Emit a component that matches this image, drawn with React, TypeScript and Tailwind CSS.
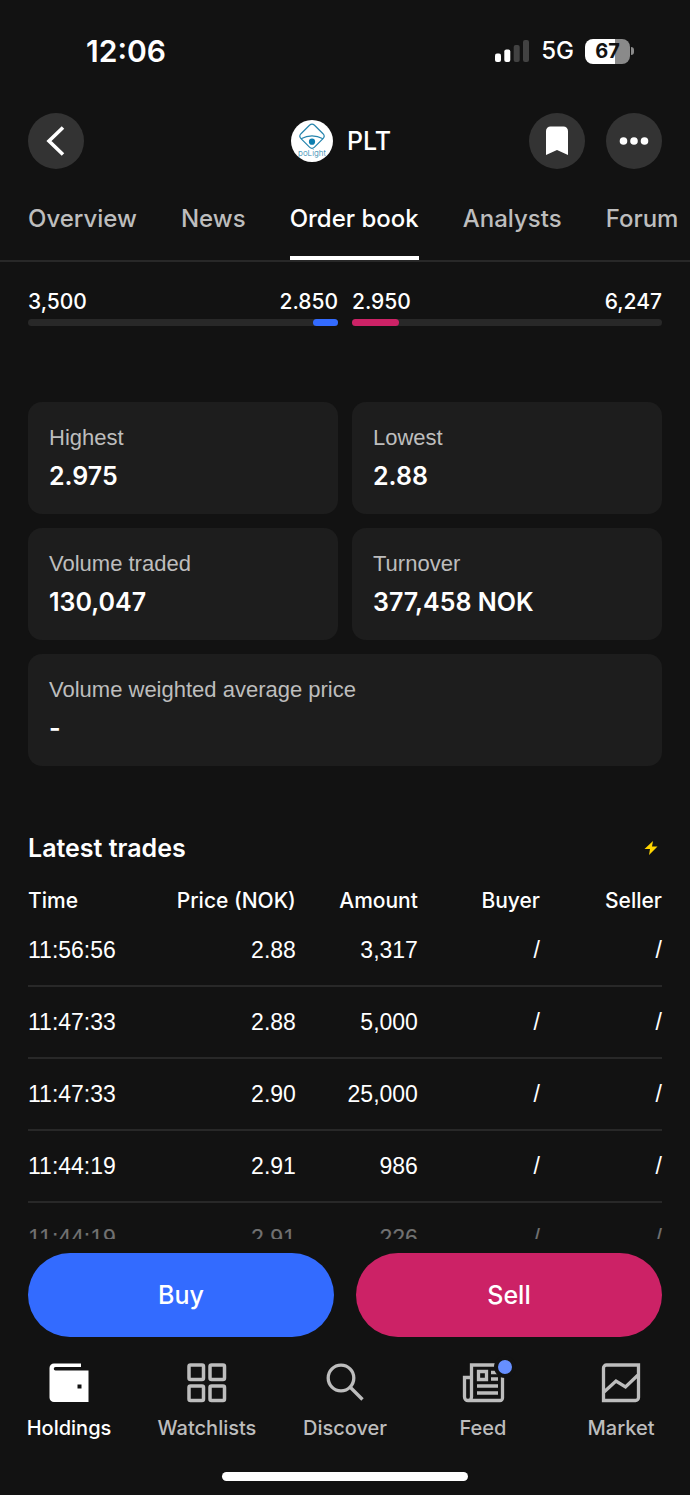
import { FC, ReactNode } from "react";

interface Trade {
  time: string;
  price: string;
  amount: string;
}

interface Stat {
  label: string;
  value: string;
  wide?: boolean;
}

interface NavItem {
  label: string;
  icon: ReactNode;
  active?: boolean;
}

const tabs = ["Overview", "News", "Order book", "Analysts", "Forum"];

const stats: Stat[] = [
  { label: "Highest", value: "2.975" },
  { label: "Lowest", value: "2.88" },
  { label: "Volume traded", value: "130,047" },
  { label: "Turnover", value: "377,458 NOK" },
  { label: "Volume weighted average price", value: "-", wide: true },
];

const trades: Trade[] = [
  { time: "11:56:56", price: "2.88", amount: "3,317" },
  { time: "11:47:33", price: "2.88", amount: "5,000" },
  { time: "11:47:33", price: "2.90", amount: "25,000" },
  { time: "11:44:19", price: "2.91", amount: "986" },
  { time: "11:44:19", price: "2.91", amount: "226" },
];

const WalletIcon = () => (
  <svg width="42" height="42" viewBox="0 0 42 42" fill="currentColor" aria-hidden="true">
    <path
      fillRule="evenodd"
      d="M6 1.5h27V5H7.5a1.5 1.5 0 0 0 0 3.5H40.5V40H6a4.5 4.5 0 0 1-4.5-4.5V6A4.5 4.5 0 0 1 6 1.5ZM29.5 22.5v4h4v-4Z"
    />
  </svg>
);

const GridIcon = () => (
  <svg width="42" height="42" viewBox="0 0 42 42" fill="none" stroke="currentColor" strokeWidth="3.5" aria-hidden="true">
    <rect x="3" y="3" width="14.5" height="14.5" rx="1.5" />
    <rect x="24" y="3" width="14.5" height="14.5" rx="1.5" />
    <rect x="3" y="24" width="14.5" height="14.5" rx="1.5" />
    <rect x="24" y="24" width="14.5" height="14.5" rx="1.5" />
  </svg>
);

const SearchIcon = () => (
  <svg width="42" height="42" viewBox="0 0 42 42" fill="none" stroke="currentColor" strokeWidth="3.3" aria-hidden="true">
    <circle cx="17" cy="16" r="12.8" />
    <path d="M26 25 38.5 37.500" />
  </svg>
);

const FeedIcon = () => (
  <svg width="46" height="42" viewBox="0 0 46 42" fill="none" stroke="currentColor" strokeWidth="3.3" aria-hidden="true">
    <path d="M35 3H11.5v32a3.5 3.5 0 0 1-7 0V15.5H10M8 38.5h32a2.5 2.5 0 0 0 2.5-2.5V15" />
    <path d="M18.500 9.500h8v8h-8ZM31 10.500h7M31 17h7M17 24H38M17 31H38" />
  </svg>
);

const MarketIcon = () => (
  <svg width="42" height="42" viewBox="0 0 42 42" fill="none" stroke="currentColor" strokeWidth="3.3" aria-hidden="true">
    <path d="M3.5 38.5V6A3 3 0 0 1 6.5 3h32v32.5a3 3 0 0 1-3 3ZM4 30 16 19l9.500 6L38 13" />
  </svg>
);

const navItems: NavItem[] = [
  { label: "Holdings", icon: <WalletIcon />, active: true },
  { label: "Watchlists", icon: <GridIcon /> },
  { label: "Discover", icon: <SearchIcon /> },
  { label: "Feed", icon: <FeedIcon /> },
  { label: "Market", icon: <MarketIcon /> },
];

const StatusBar = () => (
  <div className="flex items-center justify-between h-[102px] pl-[86px] pr-14 shrink-0">
    <span className="text-[30px] leading-9 font-semibold">12:06</span>
    <div className="flex items-center gap-[11px]">
      <svg width="35" height="22" viewBox="0 0 35 22" aria-hidden="true">
        <rect x="0" y="13.5" width="6" height="8.5" rx="2" fill="#fff" />
        <rect x="9.3" y="9.5" width="6" height="12.5" rx="2" fill="#fff" />
        <rect x="18.7" y="5" width="6" height="17" rx="2" fill="#424242" />
        <rect x="28" y="0" width="6" height="22" rx="2" fill="#424242" />
      </svg>
      <span className="text-2xl leading-8 font-medium">5G</span>
      <div className="flex items-center gap-px">
        <div className="flex items-center justify-center w-[45px] h-[25px] rounded-lg bg-linear-to-r from-white from-67% to-[#8a8a8a] to-67% text-xl leading-6 font-bold text-[#121212]">
          67
        </div>
        <div className="w-[3px] h-2 rounded-r-full bg-[#8a8a8a]" />
      </div>
    </div>
  </div>
);

const RoundButton: FC<{ label: string; children: ReactNode }> = ({ label, children }) => (
  <button
    type="button"
    aria-label={label}
    className="flex items-center justify-center size-14 rounded-full bg-[#333333]"
  >
    {children}
  </button>
);

const Logo = () => (
  <svg width="42" height="42" viewBox="0 0 42 42" aria-hidden="true">
    <circle cx="21" cy="21" r="21" fill="#fff" />
    <g fill="none" stroke="#2484ad" strokeWidth="1.2">
      <path d="M18.500 5.300a3.600 3.600 0 0 1 5 0L32 13.700a3.600 3.600 0 0 1 0 5l-8.500 8.400a3.600 3.600 0 0 1-5 0L10 18.700a3.600 3.600 0 0 1 0-5Z" />
      <path d="M10 18.700q11-5.600 22 0" />
    </g>
    <circle cx="21" cy="21.700" r="3.100" fill="#0d7eb0" />
    <text x="21" y="36" textAnchor="middle" fontSize="8" fontWeight="300" fill="#2484ad">
      poLight
    </text>
  </svg>
);

const Header = () => (
  <header className="grid grid-cols-3 items-center px-7 pt-[11px] shrink-0">
    <div>
      <RoundButton label="Back">
        <svg width="22" height="30" viewBox="0 0 22 30" fill="none" stroke="#fff" strokeWidth="3.6" aria-hidden="true">
          <path d="M18 1.500 4 15l14 13.500" />
        </svg>
      </RoundButton>
    </div>
    <div className="flex items-center justify-center gap-3.5 pr-2">
      <Logo />
      <h1 className="text-[25px] leading-8 font-medium">PLT</h1>
    </div>
    <div className="flex justify-end gap-[21px]">
      <RoundButton label="Save to watchlist">
        <svg width="22" height="30" viewBox="0 0 22 30" fill="#fff" aria-hidden="true">
          <path d="M0 5A4.500 4.500 0 0 1 4.500.500h13A4.500 4.500 0 0 1 22 5v24l-11-5L0 29Z" />
        </svg>
      </RoundButton>
      <RoundButton label="More">
        <svg width="30" height="8" viewBox="0 0 30 8" fill="#fff" aria-hidden="true">
          <circle cx="4.500" cy="4" r="3.800" />
          <circle cx="15" cy="4" r="3.800" />
          <circle cx="25.500" cy="4" r="3.800" />
        </svg>
      </RoundButton>
    </div>
  </header>
);

const Tabs = () => (
  <nav className="flex gap-11 h-[93px] px-7 border-b-2 border-[#282828] overflow-hidden shrink-0">
    {tabs.map((tab) => (
      <a
        key={tab}
        href="#"
        className={`flex items-center pt-3 border-b-4 text-2xl leading-8 font-medium whitespace-nowrap ${
          tab === "Order book"
            ? "border-white text-white"
            : "border-transparent text-[#bdbdbd]"
        }`}
      >
        {tab}
      </a>
    ))}
  </nav>
);

const Depth = () => (
  <section className="grid grid-cols-2 gap-3.5 pt-[26px] text-[21px] leading-7 font-medium">
    <div>
      <div className="flex justify-between">
        <span>3,500</span>
        <span>2.850</span>
      </div>
      <div className="flex justify-end h-[7px] mt-[3px] rounded-full bg-[#282828]">
        <div className="w-[8%] rounded-full bg-[#336bff]" />
      </div>
    </div>
    <div>
      <div className="flex justify-between">
        <span>2.950</span>
        <span>6,247</span>
      </div>
      <div className="flex h-[7px] mt-[3px] rounded-full bg-[#282828]">
        <div className="w-[15%] rounded-full bg-[#cc2266]" />
      </div>
    </div>
  </section>
);

const StatCard: FC<{ stat: Stat }> = ({ stat }) => (
  <div
    className={`h-28 px-[21px] pt-[22px] rounded-[14px] bg-[#1d1d1d] ${
      stat.wide ? "col-span-2" : ""
    }`}
  >
    <dt className="text-[22px] leading-7 text-[#bdbdbd] font-['Liberation_Sans',Arial,sans-serif]">
      {stat.label}
    </dt>
    <dd className="mt-2 text-[25px] leading-8 font-semibold">{stat.value}</dd>
  </div>
);

const LatestTrades = () => (
  <section className="pt-[66px]">
    <div className="flex items-center justify-between">
      <h2 className="text-[25px] leading-8 font-semibold">Latest trades</h2>
      <svg className="mr-1" width="14" height="14" viewBox="0 0 14 14" fill="#ffd500" role="img" aria-label="Real time">
        <path d="M9 0 .5 8H6l-1 6 8.500-8.500H8Z" />
      </svg>
    </div>
    <table className="w-full mt-6 table-fixed text-right text-[23px] leading-7">
      <thead>
        <tr className="h-[26px] text-[21px] leading-[26px] whitespace-nowrap">
          <th className="w-[23%] p-0 text-left font-medium">Time</th>
          <th className="p-0 font-medium">Price (NOK)</th>
          <th className="p-0 font-medium">Amount</th>
          <th className="p-0 font-medium">Buyer</th>
          <th className="p-0 font-medium">Seller</th>
        </tr>
      </thead>
      <tbody className="font-['Liberation_Sans',Arial,sans-serif]">
        {trades.map((trade, i) => (
          <tr key={i} className="h-[72px] border-b-2 border-[#282828]">
            <td className="p-0 text-left">{trade.time}</td>
            <td className="p-0">{trade.price}</td>
            <td className="p-0">{trade.amount}</td>
            <td className="p-0">/</td>
            <td className="p-0">/</td>
          </tr>
        ))}
      </tbody>
    </table>
  </section>
);

const BottomBar = () => (
  <footer className="pt-3.5 pb-3.5 shrink-0">
    <div className="grid grid-cols-2 gap-[22px] px-7 text-[25px] leading-8 font-medium">
      <button type="button" className="h-[84px] rounded-full bg-[#336bff]">
        Buy
      </button>
      <button type="button" className="h-[84px] rounded-full bg-[#cc2266]">
        Sell
      </button>
    </div>
    <nav className="grid grid-cols-5 mt-[25px]">
      {navItems.map((item) => (
        <a
          key={item.label}
          href="#"
          className={`flex flex-col items-center gap-2.5 text-xl leading-7 font-medium ${
            item.active ? "text-white" : "text-[#bdbdbd]"
          }`}
        >
          <span className="relative">
            {item.icon}
            {item.label === "Feed" && (
              <span className="absolute -top-1.5 -right-2.5 size-[22px] rounded-full border-4 border-[#121212] bg-[#668fff]" />
            )}
          </span>
          {item.label}
        </a>
      ))}
    </nav>
    <div className="w-[246px] h-[9px] mt-[30px] mx-auto rounded-full bg-white" />
  </footer>
);

export default function App() {
  return (
    <div className="flex flex-col h-screen bg-[#121212] text-white font-['Inter','Liberation_Sans',sans-serif]">
      <StatusBar />
      <Header />
      <Tabs />
      <main className="relative flex-1 min-h-0 px-7 overflow-hidden">
        <Depth />
        <dl className="grid grid-cols-2 gap-3.5 mt-[76px]">
          {stats.map((stat) => (
            <StatCard key={stat.label} stat={stat} />
          ))}
        </dl>
        <LatestTrades />
        <div className="absolute inset-x-0 bottom-0 h-9 bg-linear-to-b from-transparent to-[#121212]/60 to-60%" />
      </main>
      <BottomBar />
    </div>
  );
}
